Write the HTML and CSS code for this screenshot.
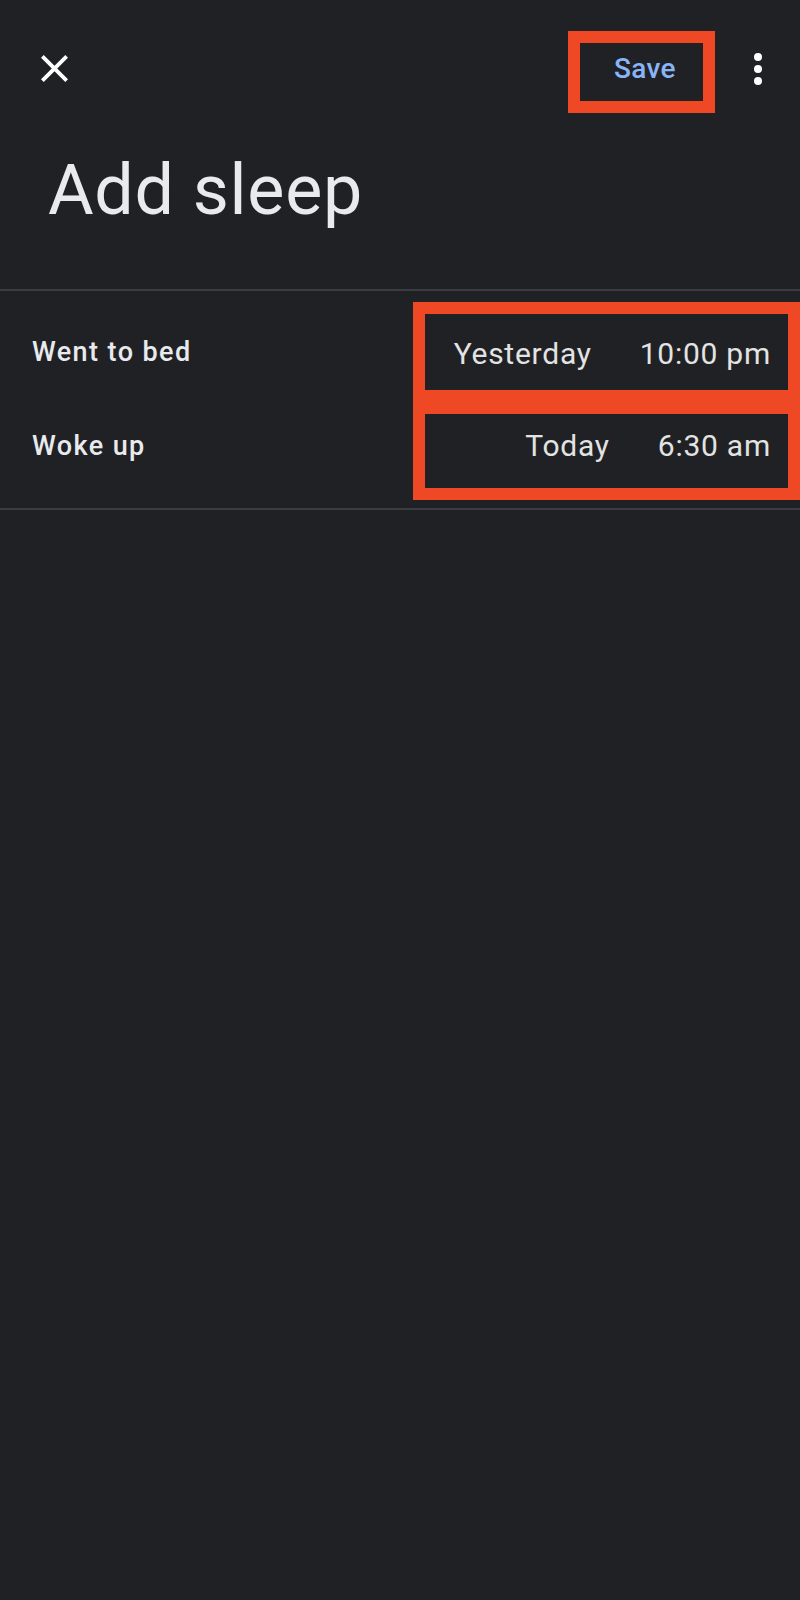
FILE: index.html
```html
<!DOCTYPE html>
<html lang="en">
<head>
<meta charset="utf-8">
<title>Add sleep</title>
<link rel="stylesheet" href="styles.css">
</head>
<body>
<div class="screen">
  <header class="toolbar">
    <button class="icon-btn close" aria-label="Close">
      <svg viewBox="5 5 14 14" width="27" height="27"><path d="M19 6.41L17.59 5 12 10.59 6.41 5 5 6.41 10.59 12 5 17.59 6.41 19 12 13.41 17.59 19 19 17.59 13.41 12z"/></svg>
    </button>
    <button class="save">Save</button>
    <button class="icon-btn more" aria-label="More options">
      <svg viewBox="0 0 24 24" width="48" height="48"><circle cx="12" cy="6" r="2"/><circle cx="12" cy="12" r="2"/><circle cx="12" cy="18" r="2"/></svg>
    </button>
  </header>

  <h1 class="title">Add sleep</h1>

  <section class="entries">
    <div class="row row--first">
      <span class="label">Went to bed</span>
      <div class="value">
        <span>Yesterday</span>
        <span>10:00 pm</span>
      </div>
    </div>
    <div class="row row--second">
      <span class="label">Woke up</span>
      <div class="value">
        <span>Today</span>
        <span>6:30 am</span>
      </div>
    </div>
  </section>
</div>
</body>
</html>
```

FILE: styles.css
```css
html, body {
  margin: 0;
  padding: 0;
  background: #202124;
}

body {
  font-family: Roboto, "Noto Sans", "Liberation Sans", sans-serif;
  color: #e8eaed;
  min-height: 1600px;
}

.screen {
  width: 800px;
}

button {
  background: none;
  border: 0;
  padding: 0;
  margin: 0;
  color: inherit;
  font: inherit;
  cursor: pointer;
}

.toolbar {
  display: flex;
  align-items: center;
  height: 137px;
  padding: 0 18px 0 41px;
}

.icon-btn svg {
  display: block;
  fill: #ffffff;
}

.save {
  margin-left: auto;
  margin-top: 7px;
  box-sizing: border-box;
  width: 147px;
  height: 82px;
  border: 12px solid #ee4825;
  padding: 0 0 8px 34px;
  text-align: left;
  font-size: 28px;
  font-weight: 500;
  letter-spacing: 0.3px;
  line-height: 33px;
  color: #8ab4f8;
}

.more {
  margin-left: 19px;
}

.title {
  margin: 12px 0 58px;
  padding-left: 48px;
  font-size: 70px;
  font-weight: 400;
  letter-spacing: 0.7px;
  line-height: 82px;
  color: #e8eaed;
}

.entries {
  border-top: 2px solid #3b3c3f;
  border-bottom: 2px solid #3b3c3f;
  padding: 11px 0 8px;
}

.row {
  display: flex;
  align-items: center;
  height: 100px;
  padding-left: 32px;
}

.row--second {
  height: 98px;
}

.label {
  font-size: 27px;
  font-weight: 500;
  letter-spacing: 1.4px;
  color: #e8eaed;
}

.row--second .label {
  margin-bottom: 11px;
}

.value {
  margin-left: auto;
  align-self: stretch;
  width: 387px;
  box-sizing: border-box;
  border: 12px solid #ee4825;
  display: flex;
  align-items: center;
  justify-content: flex-end;
  gap: 48px;
  padding-right: 17px;
  font-size: 30px;
  font-weight: 400;
  letter-spacing: 0.75px;
  color: #e3e3e3;
}

.row--first .value {
  padding-top: 3px;
}

.row--second .value {
  padding-bottom: 11px;
}
```
